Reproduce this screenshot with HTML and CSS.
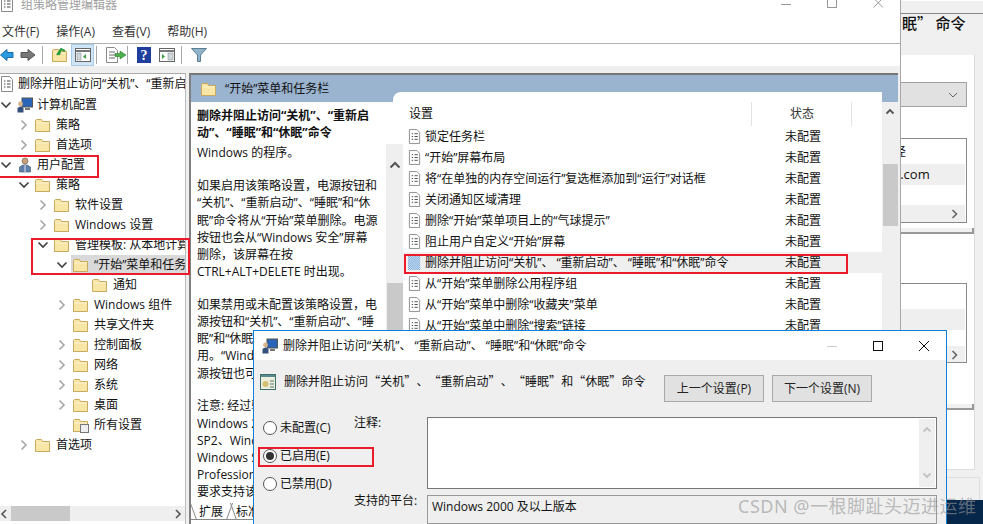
FILE: index.html
```html
<!DOCTYPE html>
<html lang="zh-CN">
<head>
<meta charset="utf-8">
<title>组策略管理编辑器</title>
<link rel="stylesheet" href="styles.css">
</head>
<body>
<svg class="defs" width="0" height="0" aria-hidden="true">
  <defs>
    <pattern id="dots" width="2" height="2" patternUnits="userSpaceOnUse"><rect width="1" height="1" fill="#fff"/><rect x="1" y="1" width="1" height="1" fill="#fff"/></pattern>
    <symbol id="folder" viewBox="0 0 16 16">
      <path d="M.5 3.500 V14.500 H14.500 V4.500 H7.500 L6.500 2.500 H1.500 Z" fill="#f7e6a6" stroke="#c9a95c"/>
      <path d="M1 6 H14" stroke="#fbf2cf"/>
    </symbol>
    <symbol id="doc" viewBox="0 0 14 16">
      <path d="M1.5 .5 H9.5 L12.5 3.5 V15.5 H1.5 Z" fill="#fff" stroke="#8a8a8a"/>
      <path d="M4 5 H5.5 M7 5 H10.5 M4 8 H5.5 M7 8 H10.5 M4 11 H5.5 M7 11 H10.5" stroke="#444"/>
    </symbol>
    <symbol id="chev-r" viewBox="0 0 10 12"><path d="M2.5 1.5 L7 6 L2.5 10.5" fill="none" stroke="#a6a6a6" stroke-width="1.6"/></symbol>
    <symbol id="chev-d" viewBox="0 0 12 10"><path d="M1.5 2.5 L6 7 L10.5 2.5" fill="none" stroke="#404040" stroke-width="1.6"/></symbol>
    <symbol id="pc" viewBox="0 0 16 16">
      <rect x="5" y="1" width="10.500" height="9" fill="#2a64b8" stroke="#555"/>
      <path d="M8 12 H13" stroke="#777" stroke-width="2"/>
      <circle cx="3.500" cy="7" r="2.400" fill="#d8b48c"/>
      <path d="M.5 15.500 V11 Q3.500 8 6.500 11 V15.500 Z" fill="#34507c"/>
    </symbol>
    <symbol id="user" viewBox="0 0 16 16">
      <circle cx="8" cy="4" r="3" fill="#c89f78" stroke="#6b5747" stroke-width=".6"/>
      <path d="M2.500 15 V10 Q8 5.500 13.500 10 V15 Z" fill="#5d7fa8" stroke="#3e5573" stroke-width=".6"/>
      <path d="M8 8 V15" stroke="#dfe8f2"/>
    </symbol>
  </defs>
</svg>

<section class="backdrop">
  <div class="back-title">眠” 命令</div>
  <div class="back-panel">
    <div class="back-combo"><svg width="10" height="6" viewBox="0 0 10 6"><path d="M1 1 L5 5 L9 1" fill="none" stroke="#666"/></svg></div>
    <div class="back-list back-list-a">
      <div class="back-row back-row-lead">径</div>
      <div class="back-row back-row-alt">s.com</div>
      <div class="back-row"></div>
      <div class="back-row back-row-foot"><svg width="8" height="10" viewBox="0 0 8 10"><path d="M1.500 1 L5.500 5 L1.500 9" fill="none" stroke="#666" stroke-width="1.600"/></svg></div>
    </div>
    <div class="back-track back-track-a"></div>
    <div class="back-list back-list-b">
      <div class="back-row back-row-lead"></div>
      <div class="back-row back-row-alt"></div>
      <div class="back-row back-row-short"></div>
      <div class="back-row back-row-foot"><svg width="8" height="10" viewBox="0 0 8 10"><path d="M1.500 1 L5.500 5 L1.500 9" fill="none" stroke="#666" stroke-width="1.600"/></svg></div>
    </div>
    <div class="back-track back-track-b"></div>
  </div>
  <div class="back-foot"></div>
  <div class="back-corner"></div>
</section>

<section class="win">
  <header class="titlebar">
    <svg class="title-icon" width="14" height="16" viewBox="0 0 14 16"><use href="#doc"/></svg>
    <span class="title-text">组策略管理编辑器</span>
    <span class="winbtns">
      <svg width="12" height="12" viewBox="0 0 12 12"><path d="M1 4.500 H11" stroke="#999"/></svg>
      <svg width="12" height="12" viewBox="0 0 12 12"><rect x="1.500" y="-3.500" width="9" height="11" fill="none" stroke="#999"/></svg>
      <svg width="12" height="12" viewBox="0 0 12 12"><path d="M1.500 -2 L11 7.500 M11 -2 L1.500 7.500" stroke="#999"/></svg>
    </span>
  </header>
  <nav class="menubar">
    <span class="menu-item">文件(F)</span><span class="menu-item">操作(A)</span><span class="menu-item">查看(V)</span><span class="menu-item">帮助(H)</span>
  </nav>
  <div class="toolbar">
    <svg class="tb" width="14" height="14" viewBox="0 0 14 14"><path d="M7 1.500 V4.500 H13 V9.500 H7 V12.500 L.5 7 Z" fill="#2b9be0" stroke="#1a6ca8"/></svg>
    <svg class="tb tb-fwd" width="16" height="14" viewBox="0 0 16 14"><path d="M8 1.500 V4.500 H1 V9.500 H8 V12.500 L15 7 Z" fill="#777" stroke="#555"/></svg>
    <span class="tb-sep"></span>
    <svg class="tb tb-up" width="16" height="16" viewBox="0 0 16 16"><use href="#folder"/><path d="M5 8 L9 2 L13 4 M9 2 L7 8" stroke="#2f9e3a" stroke-width="2" fill="none"/></svg>
    <span class="tb-active"><svg width="16" height="14" viewBox="0 0 16 14"><rect x=".5" y=".5" width="15" height="13" fill="#fff" stroke="#666"/><path d="M1 3 H15" stroke="#777" stroke-width="2"/><rect x="2" y="5" width="4" height="7" fill="#cbd6dd" stroke="#888" stroke-width=".5"/><path d="M11 6 L8 8.500 L11 11 Z" fill="#3a9e3f"/></svg></span>
    <span class="tb-sep tb-sep-a"></span>
    <svg class="tb tb-export" width="22" height="16" viewBox="0 0 22 16"><path d="M1.500 .5 H9.500 L12.500 3.500 V15.500 H1.500 Z" fill="#fff" stroke="#8a8a8a"/><path d="M4 5 H10 M4 8 H10 M4 11 H10" stroke="#666"/><path d="M10 6.500 H15 V4 L21 8 L15 12 V9.500 H10 Z" fill="#4cae4c" stroke="#2c7d2c" stroke-width=".6"/></svg>
    <span class="tb-sep tb-sep-b"></span>
    <svg class="tb tb-help" width="14" height="16" viewBox="0 0 14 16"><rect width="14" height="16" fill="#1f3f9f"/><text x="7" y="13" class="help-glyph">?</text></svg>
    <svg class="tb tb-pane" width="16" height="14" viewBox="0 0 16 14"><rect x=".5" y=".5" width="15" height="13" fill="#fff" stroke="#666"/><path d="M1 3 H15" stroke="#777" stroke-width="2"/><path d="M3 6 L6 8.500 L3 11 Z" fill="#3a9e3f"/><rect x="9" y="5" width="5" height="7" fill="#cbd6dd" stroke="#888" stroke-width=".5"/></svg>
    <span class="tb-sep"></span>
    <svg class="tb tb-filter" width="16" height="14" viewBox="0 0 16 14"><path d="M.5 .5 H15.500 L9.500 7 V13.500 H6.500 V7 Z" fill="#8fb3c9" stroke="#5c7c90"/></svg>
  </div>
  <div class="toolstrip"></div>

  <div class="panes">
    <aside class="tree">
      <div class="tree-rows">
        <div class="node lv-root"><svg class="ico-root" viewBox="0 0 14 16"><use href="#doc"/></svg><span class="clip">删除并阻止访问“关机”、“重新启动”</span></div>
        <div class="node lv0"><svg class="tw" viewBox="0 0 12 10"><use href="#chev-d"/></svg><svg class="ico16" viewBox="0 0 16 16"><use href="#pc"/></svg><span>计算机配置</span></div>
        <div class="node lv1"><svg class="tw" viewBox="0 0 10 12"><use href="#chev-r"/></svg><svg class="ico16" viewBox="0 0 16 16"><use href="#folder"/></svg><span>策略</span></div>
        <div class="node lv1"><svg class="tw" viewBox="0 0 10 12"><use href="#chev-r"/></svg><svg class="ico16" viewBox="0 0 16 16"><use href="#folder"/></svg><span>首选项</span></div>
        <div class="node lv0"><svg class="tw" viewBox="0 0 12 10"><use href="#chev-d"/></svg><svg class="ico16" viewBox="0 0 16 16"><use href="#user"/></svg><span>用户配置</span></div>
        <div class="node lv1"><svg class="tw" viewBox="0 0 12 10"><use href="#chev-d"/></svg><svg class="ico16" viewBox="0 0 16 16"><use href="#folder"/></svg><span>策略</span></div>
        <div class="node lv2"><svg class="tw" viewBox="0 0 10 12"><use href="#chev-r"/></svg><svg class="ico16" viewBox="0 0 16 16"><use href="#folder"/></svg><span>软件设置</span></div>
        <div class="node lv2"><svg class="tw" viewBox="0 0 10 12"><use href="#chev-r"/></svg><svg class="ico16" viewBox="0 0 16 16"><use href="#folder"/></svg><span>Windows 设置</span></div>
        <div class="node lv2"><svg class="tw" viewBox="0 0 12 10"><use href="#chev-d"/></svg><svg class="ico16" viewBox="0 0 16 16"><use href="#folder"/></svg><span class="clip">管理模板: 从本地计算机</span></div>
        <div class="node lv3 node-sel"><svg class="tw" viewBox="0 0 12 10"><use href="#chev-d"/></svg><svg class="ico16" viewBox="0 0 16 16"><use href="#folder"/></svg><span class="clip">“开始”菜单和任务栏</span></div>
        <div class="node lv4"><svg class="ico16" viewBox="0 0 16 16"><use href="#folder"/></svg><span>通知</span></div>
        <div class="node lv3"><svg class="tw" viewBox="0 0 10 12"><use href="#chev-r"/></svg><svg class="ico16" viewBox="0 0 16 16"><use href="#folder"/></svg><span>Windows 组件</span></div>
        <div class="node lv3"><span class="tw"></span><svg class="ico16" viewBox="0 0 16 16"><use href="#folder"/></svg><span>共享文件夹</span></div>
        <div class="node lv3"><svg class="tw" viewBox="0 0 10 12"><use href="#chev-r"/></svg><svg class="ico16" viewBox="0 0 16 16"><use href="#folder"/></svg><span>控制面板</span></div>
        <div class="node lv3"><svg class="tw" viewBox="0 0 10 12"><use href="#chev-r"/></svg><svg class="ico16" viewBox="0 0 16 16"><use href="#folder"/></svg><span>网络</span></div>
        <div class="node lv3"><svg class="tw" viewBox="0 0 10 12"><use href="#chev-r"/></svg><svg class="ico16" viewBox="0 0 16 16"><use href="#folder"/></svg><span>系统</span></div>
        <div class="node lv3"><svg class="tw" viewBox="0 0 10 12"><use href="#chev-r"/></svg><svg class="ico16" viewBox="0 0 16 16"><use href="#folder"/></svg><span>桌面</span></div>
        <div class="node lv3"><span class="tw"></span><svg class="ico16" viewBox="0 0 16 16"><use href="#folder"/><rect x="7.500" y="7.500" width="8" height="8" fill="#eee" stroke="#777"/></svg><span>所有设置</span></div>
        <div class="node lv1"><svg class="tw" viewBox="0 0 10 12"><use href="#chev-r"/></svg><svg class="ico16" viewBox="0 0 16 16"><use href="#folder"/></svg><span>首选项</span></div>
      </div>
      <div class="hscroll">
        <svg width="8" height="10" viewBox="0 0 8 10"><path d="M6 1 L2 5 L6 9" fill="none" stroke="#555" stroke-width="1.600"/></svg>
        <span class="hscroll-track"><span class="hscroll-thumb"></span></span>
        <svg width="8" height="10" viewBox="0 0 8 10"><path d="M2 1 L6 5 L2 9" fill="none" stroke="#555" stroke-width="1.600"/></svg>
      </div>
    </aside>

    <main class="detail">
      <div class="detail-head">
        <svg class="head-folder" viewBox="0 0 16 16"><use href="#folder"/></svg>
        <span>“开始”菜单和任务栏</span>
      </div>
      <div class="detail-body">
        <div class="desc">
          <div class="desc-text">
            <p class="desc-bold">删除并阻止访问“关机”、“重新启<br>动”、“睡眠”和“休眠”命令</p>
            <p class="desc-p">Windows 的程序。</p>
            <p class="desc-p">如果启用该策略设置，电源按钮和<br>“关机”、“重新启动”、“睡眠”和“休<br>眠”命令将从“开始”菜单删除。电源<br>按钮也会从“Windows 安全”屏幕<br>删除，该屏幕在按<br>CTRL+ALT+DELETE 时出现。</p>
            <p class="desc-p">如果禁用或未配置该策略设置，电<br>源按钮和“关机”、“重新启动”、“睡<br>眠”和“休眠”命令可<br>用。“Windows 安全”屏幕上的电<br>源按钮也可用。</p>
            <p class="desc-p">注意: 经过验证<br>Windows 2000<br>SP2、Windows XP<br>Windows Server<br>Professional<br>要求支持该设置</p>
          </div>
          <div class="tabs"><span class="tab tab-on">扩展</span><span class="tab tab-off">标准</span></div>
        </div>
        <div class="desc-scroll">
          <svg width="12" height="8" viewBox="0 0 12 8"><path d="M1.500 6.500 L6 2 L10.500 6.500" fill="none" stroke="#555" stroke-width="2"/></svg>
          <span class="desc-thumb"></span>
        </div>
        <div class="list-card">
          <div class="list-head"><span class="col-name">设置</span><span class="col-state">状态</span></div>
          <div class="list-row"><svg class="ico-doc" viewBox="0 0 14 16"><use href="#doc"/></svg><span class="col-name">锁定任务栏</span><span class="col-val">未配置</span></div>
          <div class="list-row"><svg class="ico-doc" viewBox="0 0 14 16"><use href="#doc"/></svg><span class="col-name">“开始”屏幕布局</span><span class="col-val">未配置</span></div>
          <div class="list-row"><svg class="ico-doc" viewBox="0 0 14 16"><use href="#doc"/></svg><span class="col-name">将“在单独的内存空间运行”复选框添加到“运行”对话框</span><span class="col-val">未配置</span></div>
          <div class="list-row"><svg class="ico-doc" viewBox="0 0 14 16"><use href="#doc"/></svg><span class="col-name">关闭通知区域清理</span><span class="col-val">未配置</span></div>
          <div class="list-row"><svg class="ico-doc" viewBox="0 0 14 16"><use href="#doc"/></svg><span class="col-name">删除“开始”菜单项目上的“气球提示”</span><span class="col-val">未配置</span></div>
          <div class="list-row"><svg class="ico-doc" viewBox="0 0 14 16"><use href="#doc"/></svg><span class="col-name">阻止用户自定义“开始”屏幕</span><span class="col-val">未配置</span></div>
          <div class="list-row list-row-sel"><svg class="ico-doc" viewBox="0 0 14 16"><rect width="13" height="16" fill="#4f8fd0"/><rect width="13" height="16" fill="url(#dots)"/></svg><span class="col-name">删除并阻止访问“关机”<span class="pause">、</span>“重新启动”<span class="pause">、</span>“睡眠”和“休眠”命令</span><span class="col-val">未配置</span></div>
          <div class="list-row"><svg class="ico-doc" viewBox="0 0 14 16"><use href="#doc"/></svg><span class="col-name">从“开始”菜单删除公用程序组</span><span class="col-val">未配置</span></div>
          <div class="list-row"><svg class="ico-doc" viewBox="0 0 14 16"><use href="#doc"/></svg><span class="col-name">从“开始”菜单中删除“收藏夹”菜单</span><span class="col-val">未配置</span></div>
          <div class="list-row"><svg class="ico-doc" viewBox="0 0 14 16"><use href="#doc"/></svg><span class="col-name">从“开始”菜单中删除“搜索”链接</span><span class="col-val">未配置</span></div>
        </div>
        <div class="list-scroll">
          <svg width="10" height="7" viewBox="0 0 10 7"><path d="M1.500 5.500 L5 2 L8.500 5.500" fill="none" stroke="#555" stroke-width="1.800"/></svg>
          <span class="list-thumb"></span>
        </div>
      </div>
    </main>
  </div>
</section>

<section class="dialog">
  <header class="dlg-title">
    <svg class="ico16" viewBox="0 0 16 16"><use href="#pc"/></svg>
    <span>删除并阻止访问“关机”<span class="pause">、</span>“重新启动”<span class="pause">、</span>“睡眠”和“休眠”命令</span>
    <span class="dlg-btns">
      <svg width="12" height="12" viewBox="0 0 12 12"><path d="M1 6.500 H11" stroke="#ccc"/></svg>
      <svg width="12" height="12" viewBox="0 0 12 12"><rect x="1.500" y="1.500" width="9" height="9" fill="none" stroke="#111"/></svg>
      <svg width="12" height="12" viewBox="0 0 12 12"><path d="M1 1 L11 11 M11 1 L1 11" stroke="#111"/></svg>
    </span>
  </header>
  <div class="dlg-body">
    <div class="dlg-top">
      <svg class="dlg-icon" width="16" height="16" viewBox="0 0 16 16"><rect width="16" height="16" fill="#3f6f6a"/><rect x="1" y="3" width="14" height="12" fill="#eeeedd"/><rect x="1" y="1" width="14" height="2" fill="#5a8a90"/><circle cx="5.500" cy="10" r="3" fill="#d0c070"/><path d="M10 7 H14 M10 10 H14 M10 13 H14" stroke="#5a7a70"/></svg>
      <span class="dlg-heading">删除并阻止访问 “关机” 、 “重新启动” 、 “睡眠” 和 “休眠” 命令</span>
      <button class="dlg-btn dlg-btn-prev">上一个设置(P)</button>
      <button class="dlg-btn">下一个设置(N)</button>
    </div>
    <div class="dlg-main">
      <div class="radios">
        <label class="radio"><span class="dot"></span>未配置(C)</label>
        <label class="radio"><span class="dot dot-on"></span>已启用(E)</label>
        <label class="radio"><span class="dot"></span>已禁用(D)</label>
      </div>
      <div class="fields">
        <div class="field-labels"><span class="lab-note">注释:</span><span class="lab-plat">支持的平台:</span></div>
        <div class="field-boxes">
          <div class="note-box">
            <div class="note-scroll">
              <svg width="10" height="7" viewBox="0 0 10 7"><path d="M1.500 5.500 L5 2 L8.500 5.500" fill="none" stroke="#c2c2c2" stroke-width="1.800"/></svg>
              <svg width="10" height="7" viewBox="0 0 10 7"><path d="M1.500 1.500 L5 5 L8.500 1.500" fill="none" stroke="#c2c2c2" stroke-width="1.800"/></svg>
            </div>
          </div>
          <div class="plat-box">Windows 2000 及以上版本</div>
        </div>
      </div>
    </div>
  </div>
</section>

<span class="mark mark-1"></span>
<span class="mark mark-2"></span>
<span class="mark mark-3"></span>
<span class="mark mark-4"></span>
<div class="watermark">CSDN @一根脚趾头迈进运维</div>
</body>
</html>
```

FILE: styles.css
```css
* { box-sizing: border-box; }
html, body { margin: 0; padding: 0; }
body {
  position: relative;
  width: 983px;
  height: 524px;
  overflow: hidden;
  background: #fff;
  color: #111;
  font: 12px/17px "Open Sans", "Noto Sans CJK SC", sans-serif;
}
p { margin: 0; }
.defs { position: absolute; }
.clip { white-space: nowrap; overflow: hidden; flex: 1; min-width: 0; }
.pause { margin-right: 3px; }

/* windows on the desktop */
.backdrop { position: absolute; z-index: 0; left: 900px; top: 0; width: 83px; height: 524px; background: #f0f0f0; border-top: 1px solid #fff; }
.win { position: absolute; z-index: 1; left: 0; top: 0; width: 901px; height: 524px; background: #fff; border-right: 1px solid #a8a8a8; display: flex; flex-direction: column; }
.dialog { position: absolute; z-index: 2; left: 253px; top: 330px; width: 694px; height: 194px; background: #efefef; border: 1px solid #0f7fd8; border-bottom: 0; display: flex; flex-direction: column; }

/* background window */
.back-title { margin-top: 12px; height: 42px; border-top: 1px solid #888; padding: 0 0 0 2px; font: 500 15px/18px "Noto Sans CJK SC", sans-serif; color: #111; }
.back-panel { width: 75px; height: 415px; background: #fff; border-right: 1px solid #ddd; border-bottom: 1px solid #ddd; padding-top: 27px; }
.back-combo { width: 67px; height: 25px; background: #e1e1e1; border: 1px solid #a0a0a0; border-left: 0; display: flex; align-items: center; justify-content: flex-end; padding-right: 8px; }
.back-list { width: 67px; border: 1px solid #8a8a8a; border-left: 0; background: #fff; overflow: hidden; }
.back-list-a { margin-top: 31px; height: 85px; }
.back-list-b { margin-top: 49px; height: 80px; }
.back-row { height: 20px; line-height: 25px; text-indent: -6px; }
.back-row-lead { height: 25px; }
.back-row-alt { height: 21px; background: #efefef; margin-right: 1px; font-size: 13px; line-height: 21px; }
.back-row-short { height: 16px; }
.back-row-foot { height: 17px; background: #efefef; display: flex; align-items: center; justify-content: flex-end; padding-right: 6px; margin-right: 1px; }
.back-track { width: 74px; height: 6px; background: #f0f0f0; border-right: 2px solid #999; border-bottom: 2px solid #999; }
.back-track-a { margin-top: 5px; }
.back-track-b { margin-top: 41px; }
.back-foot { width: 80px; height: 47px; margin-top: 7px; border-top: 1px solid #ddd; border-right: 1px solid #ddd; }
.back-corner { position: absolute; left: 46px; bottom: 0; width: 37px; height: 24px; background: #06264a; }

/* title + menu */
.titlebar { height: 18px; display: flex; align-items: flex-start; overflow: hidden; }
.title-icon { margin-top: -4px; flex: none; }
.title-text { margin-left: 7px; margin-top: -3px; line-height: 16px; color: #a0a0a0; }
.winbtns { margin-left: auto; display: flex; gap: 34px; padding-right: 16px; }
.menubar { height: 26px; padding: 6px 0 0 2px; border-bottom: 1px solid #b0b0b0; display: flex; gap: 17px; line-height: 16px; color: #333; }
.menu-item { white-space: nowrap; }
.toolbar { height: 22px; display: flex; align-items: center; }
.tb { flex: none; }
.tb-fwd { margin-left: 6px; }
.tb-sep { width: 1px; height: 18px; background: #aaa; margin-left: 6px; flex: none; }
.tb-sep-a { margin-left: 2px; }
.tb-sep-b { margin-left: 0; }
.tb-up { margin-left: 9px; }
.tb-export { margin-left: 8px; }
.tb-help { margin-left: 9px; }
.tb-pane { margin-left: 8px; }
.tb-filter { margin-left: 9px; }
.tb-active { width: 23px; height: 22px; margin-left: 3px; background: #cfe4f5; border: 1px solid #a5cbe8; display: flex; align-items: center; justify-content: center; flex: none; }
.help-glyph { font: bold 14px "Liberation Serif", serif; fill: #fff; text-anchor: middle; }
.toolstrip { height: 7px; background: #efefef; flex: none; }

.panes { flex: 1; min-height: 0; display: flex; background: #efefef; }

/* tree */
.tree { width: 186px; flex: none; background: #fff; display: flex; flex-direction: column; border-top: 1px solid #aaa; border-right: 1px solid #bbb; margin-right: 3px; }
.tree-rows { flex: 1; min-height: 0; }
.node { height: 20px; display: flex; align-items: center; white-space: nowrap; line-height: 16px; }
.tw { width: 12px; height: 12px; flex: none; margin-right: 5px; }
.ico16 { width: 16px; height: 16px; flex: none; margin-right: 5px; }
.lv0 .ico16 { margin-right: 4px; }
.ico-root { width: 14px; height: 16px; flex: none; margin-right: 4px; }
.lv-root { margin-bottom: 1px; }
.lv1 { padding-left: 18px; }
.lv2 { padding-left: 37px; }
.lv3 { padding-left: 56px; }
.lv4 { padding-left: 92px; }
.node-sel { background: linear-gradient(90deg, #fff 71px, #d9d9d9 71px); }
.hscroll { height: 15px; display: flex; align-items: center; padding-right: 3px; background: #efefef; gap: 2px; margin-bottom: 3px; flex: none; }
.hscroll-track { flex: 1; height: 15px; }
.hscroll-thumb { display: block; width: 59px; height: 15px; background: #c9c9c9; margin-left: 1px; }

/* detail */
.detail { flex: 1; min-width: 0; display: flex; flex-direction: column; border-top: 2px solid #777; border-left: 2px solid #808080; margin-right: 2px; background: #fff; }
.detail-head { height: 27px; background: #9ab3cf; display: flex; align-items: center; padding-left: 10px; gap: 8px; flex: none; }
.head-folder { width: 16px; height: 16px; }
.detail-body { flex: 1; min-height: 0; display: flex; }
.desc { width: 195px; flex: none; padding: 5px 0 0 6px; display: flex; flex-direction: column; background: #fff; overflow: hidden; }
.desc-text { flex: 1; min-height: 0; overflow: hidden; line-height: 17.200px; white-space: nowrap; }
.desc-bold { font-weight: 700; }
.desc-p { margin-top: 3px; }
.desc-p + .desc-p { margin-top: 15.500px; }
.tabs { height: 21px; display: flex; margin-left: -6px; flex: none; align-items: flex-start; background: #fff; }
.tab { position: relative; height: 17px; line-height: 17px; border-bottom: 1px solid #888; }
.tab-on { padding: 0 8px; }
.tab-off { padding: 0 8px 0 5px; }
.tab::before, .tab::after { content: ""; position: absolute; top: 0; bottom: -1px; width: 1px; background: #888; }
.tab::before { left: 2px; transform: skewX(20deg); }
.tab::after { right: 1px; transform: skewX(-20deg); }
.desc-scroll { position: relative; z-index: 2; width: 17px; flex: none; background: #efefef; margin-top: 42px; display: flex; flex-direction: column; align-items: center; padding-top: 17px; }
.desc-thumb { width: 16px; height: 47px; background: #c9c9c9; margin-top: 114px; flex: none; }
.list-card { flex: 1; min-width: 0; margin: -10px 0 0 -10px; padding: 10px 0 0 10px; background: #fff; border-radius: 8px 0 0 0; position: relative; z-index: 1; overflow: hidden; }
.list-head, .list-row { display: flex; align-items: center; white-space: nowrap; }
.list-head { height: 24px; padding-left: 6px; }
.list-head .col-name { flex: none; width: 343px; height: 24px; line-height: 24px; border-right: 1px solid #e3e3e3; }
.col-state { flex: none; width: 100px; height: 24px; line-height: 24px; padding-left: 38px; border-right: 1px solid #e3e3e3; color: #333; }
.list-row { height: 21px; padding-left: 5px; }
.list-row .col-name { flex: none; width: 360px; }
.ico-doc { width: 13px; height: 15px; flex: none; margin-right: 4px; }
.col-val { flex: none; }
.list-row-sel { background: #efefef; }
.list-scroll { width: 16px; flex: none; background: #efefef; display: flex; flex-direction: column; align-items: center; padding-top: 6px; position: relative; z-index: 2; }
.list-thumb { width: 15px; height: 62px; background: #c9c9c9; margin-top: 49px; flex: none; }

/* dialog */
.dlg-title { height: 29px; background: #fff; display: flex; align-items: center; padding-left: 8px; flex: none; }
.dlg-title .ico16 { margin-right: 5px; }
.dlg-btns { margin-left: auto; display: flex; gap: 34px; padding-right: 16px; }
.dlg-body { flex: 1; min-height: 0; display: flex; flex-direction: column; }
.dlg-top { display: flex; align-items: flex-start; padding: 14px 0 0 6px; height: 56px; flex: none; }
.dlg-icon { margin-right: 8px; flex: none; }
.dlg-heading { font-family: "Noto Sans CJK SC", sans-serif; width: 380px; flex: none; white-space: nowrap; line-height: 13px; overflow: hidden; word-spacing: -2.500px; }
.dlg-btn { width: 100px; height: 27px; margin-top: 1px; background: #e1e1e1; border: 1px solid #a8a8a8; font: inherit; color: #222; padding: 0; flex: none; }
.dlg-btn-prev { margin-right: 8px; }
.dlg-main { flex: 1; display: flex; min-height: 0; }
.radios { width: 100px; flex: none; display: flex; flex-direction: column; padding: 3px 0 0 9px; gap: 11px; }
.radio { display: flex; align-items: center; gap: 3px; height: 17px; white-space: nowrap; }
.dot { width: 14px; height: 14px; border-radius: 50%; border: 1px solid #555; background: #fff; flex: none; position: relative; }
.dot-on::after { content: ""; position: absolute; left: 2px; top: 2px; width: 8px; height: 8px; border-radius: 50%; background: #333; }
.fields { flex: 1; display: flex; min-width: 0; }
.field-labels { width: 73px; flex: none; display: flex; flex-direction: column; }
.lab-note { height: 78px; margin-top: -2px; flex: none; }
.field-boxes { width: 510px; flex: none; display: flex; flex-direction: column; gap: 6px; margin-top: 1px; }
.note-box { height: 72px; background: #fff; border: 1px solid #777; display: flex; justify-content: flex-end; padding: 1px; flex: none; }
.note-scroll { width: 16px; background: #efefef; display: flex; flex-direction: column; justify-content: space-between; align-items: center; padding: 7px 0 8px; }
.plat-box { flex: 1; border: 1px solid #999; padding: 2px 4px; background: #efefef; }

/* red callouts and watermark sit over everything */
.mark { position: absolute; z-index: 5; border: 2px solid #ea1c2c; pointer-events: none; }
.mark-1 { left: -2px; top: 155px; width: 101px; height: 23px; }
.mark-2 { left: 31px; top: 238px; width: 159px; height: 37px; }
.mark-3 { left: 404px; top: 254px; width: 444px; height: 20px; }
.mark-4 { left: 258px; top: 447px; width: 116px; height: 20px; }
.watermark { position: absolute; z-index: 6; left: 738px; top: 494px; font: 18px/24px "Noto Sans", "Noto Sans CJK SC", sans-serif; letter-spacing: .5px; color: rgba(150,150,150,.62); white-space: nowrap; }
```
